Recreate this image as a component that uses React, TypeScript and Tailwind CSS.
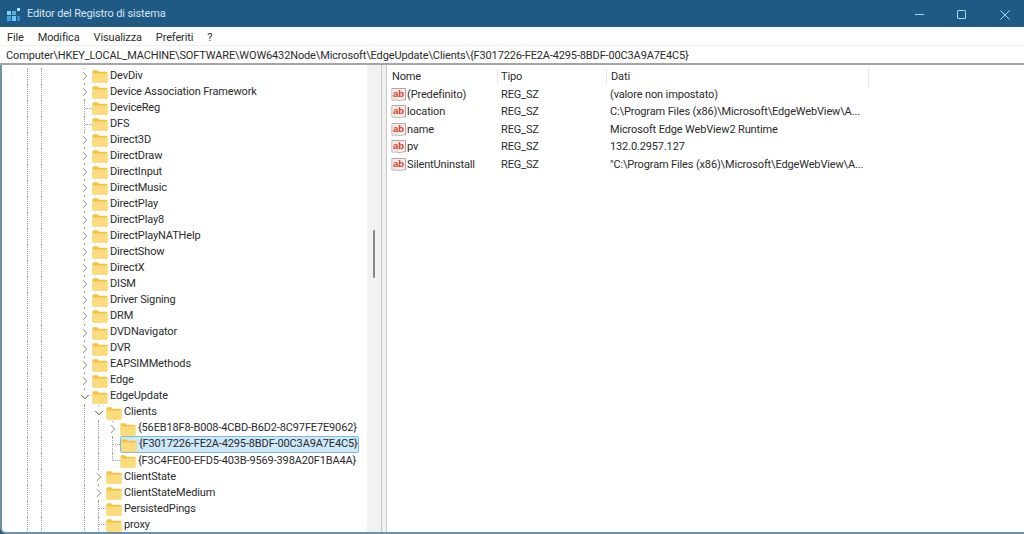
import React from 'react';
import { ChevronDown, ChevronRight } from 'lucide-react';

type Node = {
  label: string;
  level?: number;
  toggle?: 'closed' | 'open' | 'none';
  selected?: boolean;
  last?: boolean;
};

const tree: Node[] = [
  { label: 'DevDiv', toggle: 'closed' },
  { label: 'Device Association Framework', toggle: 'closed' },
  { label: 'DeviceReg', toggle: 'none' },
  { label: 'DFS', toggle: 'none' },
  { label: 'Direct3D', toggle: 'closed' },
  { label: 'DirectDraw', toggle: 'closed' },
  { label: 'DirectInput', toggle: 'closed' },
  { label: 'DirectMusic', toggle: 'closed' },
  { label: 'DirectPlay', toggle: 'closed' },
  { label: 'DirectPlay8', toggle: 'closed' },
  { label: 'DirectPlayNATHelp', toggle: 'closed' },
  { label: 'DirectShow', toggle: 'closed' },
  { label: 'DirectX', toggle: 'closed' },
  { label: 'DISM', toggle: 'closed' },
  { label: 'Driver Signing', toggle: 'closed' },
  { label: 'DRM', toggle: 'closed' },
  { label: 'DVDNavigator', toggle: 'closed' },
  { label: 'DVR', toggle: 'closed' },
  { label: 'EAPSIMMethods', toggle: 'closed' },
  { label: 'Edge', toggle: 'closed' },
  { label: 'EdgeUpdate', toggle: 'open' },
  { label: 'Clients', level: 1, toggle: 'open' },
  { label: '{56EB18F8-B008-4CBD-B6D2-8C97FE7E9062}', level: 2, toggle: 'closed' },
  { label: '{F3017226-FE2A-4295-8BDF-00C3A9A7E4C5}', level: 2, toggle: 'none', selected: true },
  { label: '{F3C4FE00-EFD5-403B-9569-398A20F1BA4A}', level: 2, toggle: 'none', last: true },
  { label: 'ClientState', level: 1, toggle: 'closed' },
  { label: 'ClientStateMedium', level: 1, toggle: 'closed' },
  { label: 'PersistedPings', level: 1, toggle: 'none' },
  { label: 'proxy', level: 1, toggle: 'none' },
];

const values = [
  { name: '(Predefinito)', data: '(valore non impostato)' },
  { name: 'location', data: 'C:\\Program Files (x86)\\Microsoft\\EdgeWebView\\A...' },
  { name: 'name', data: 'Microsoft Edge WebView2 Runtime' },
  { name: 'pv', data: '132.0.2957.127' },
  { name: 'SilentUninstall', data: '"C:\\Program Files (x86)\\Microsoft\\EdgeWebView\\A...' },
];

const RegeditIcon = () => (
  <svg width="16" height="16" viewBox="0 0 16 16">
    <rect x="1" y="4" width="4" height="4" fill="#7fd0f0" />
    <rect x="6" y="4" width="4" height="4" fill="#4fb3e0" />
    <rect x="1" y="9" width="4" height="5" fill="#3fa5d8" />
    <rect x="6" y="9" width="4" height="5" fill="#6fc6ec" />
    <rect x="11" y="9" width="3" height="5" fill="#2f8fc4" />
    <rect x="11" y="1" width="3" height="3" fill="#a8e2f8" />
  </svg>
);

const FolderIcon = () => (
  <svg width="16" height="14" viewBox="0 0 16 14" className="shrink-0">
    <path d="M0.5 2.5c0-.8.5-1.3 1.3-1.3h3.6l1.6 1.6h7.2c.8 0 1.3.5 1.3 1.3v8c0 .8-.5 1.3-1.3 1.3H1.8c-.8 0-1.3-.5-1.3-1.3z" fill="#f5c344" />
    <path d="M0.5 4.6h15v7.8c0 .8-.5 1.3-1.3 1.3H1.8c-.8 0-1.3-.5-1.3-1.3z" fill="#fbdc7c" />
  </svg>
);

const AbIcon = () => (
  <svg width="16" height="16" viewBox="0 0 16 16" className="shrink-0">
    <path d="M1 1.5h13.5v11.5c-2.2-1.4-4.4 1.4-6.8.4C5.3 12.4 3.2 13.4 1 13z" fill="#fff" stroke="#a9a9a9" strokeWidth="1" />
    <path d="M1.6 2.2h12.2v9.4c-2-.9-4 1.2-6.1.4-2.1-.8-4-.1-6.1.4z" fill="#fbe6e1" />
    <text x="2" y="9.6" fontSize="9.5" fontWeight="700" fill="#d2452f" fontFamily='"Liberation Sans", sans-serif'>ab</text>
  </svg>
);

// a passing tree line, 14px apart for each level
const Line = ({ wide }: { wide?: boolean }) => (
  <div className={`h-full shrink-0 border-l border-dotted border-[#a0a0a0] ${wide ? 'w-[43px]' : 'w-[14px]'}`} />
);

// the part of the tree line next to the folder: chevron or little tick
const Connector = ({ node }: { node: Node }) => {
  if (node.last) {
    return <div className="h-1/2 w-[8px] shrink-0 self-start border-b border-l border-dotted border-[#a0a0a0]" />;
  }
  return (
    <div className="flex h-full w-[8px] shrink-0 items-center border-l border-dotted border-[#a0a0a0]">
      {node.toggle === 'none' && <div className="w-[7px] border-t border-dotted border-[#a0a0a0]" />}
      {node.toggle === 'closed' && (
        <ChevronRight size={14} strokeWidth={1.5} color="#707070" className="-ml-[7px] shrink-0 bg-white" />
      )}
      {node.toggle === 'open' && (
        <ChevronDown size={14} strokeWidth={1.5} color="#404040" className="-ml-[7px] shrink-0 bg-white" />
      )}
    </div>
  );
};

const TreeRow = ({ node }: { node: Node }) => {
  const level = node.level ?? 0;
  return (
    <div className="flex h-[16.04px] shrink-0 items-center">
      <Line />
      <Line wide />
      {level > 0 && <Line />}
      {level > 1 && <Line />}
      <Connector node={node} />
      <div
        className={
          node.selected
            ? 'flex h-[17px] w-[239px] shrink-0 items-center rounded-[2px] border border-[#7fb8dc] bg-[#cde8f8]'
            : 'flex items-center'
        }
      >
        <FolderIcon />
        <span className="ml-[2px] whitespace-nowrap">{node.label}</span>
      </div>
    </div>
  );
};

export default function App() {
  return (
    <div
      className="flex h-[534px] w-[1024px] flex-col overflow-hidden bg-[#2b4a5e] text-[11px] tracking-[-0.14px] text-[#2b2b2b]"
      style={{ fontFamily: 'Roboto, "Liberation Sans", sans-serif' }}
    >
      <div className="flex h-[27px] shrink-0 items-center bg-[#1f5a85] pt-[2px] text-white">
        <div className="ml-[6px] mr-[5px]">
          <RegeditIcon />
        </div>
        <span className="text-[#d8e4ee]">Editor del Registro di sistema</span>
        <div className="ml-auto flex items-center text-[#a9d4ee]">
          <div className="mr-[33px] h-px w-[9px] bg-[#a9d4ee]" />
          <div className="mr-[34px] h-[9px] w-[9px] rounded-[1px] border border-[#a9d4ee]" />
          <svg width="10" height="10" viewBox="0 0 10 10" className="mr-[14px]">
            <path d="M0.5 0.5l9 9M9.5 0.5l-9 9" stroke="#a9d4ee" strokeWidth="1" />
          </svg>
        </div>
      </div>

      <div className="flex h-[18px] shrink-0 items-center gap-[14px] bg-white pt-[4px] pl-[7px]">
        <span>File</span>
        <span>Modifica</span>
        <span>Visualizza</span>
        <span>Preferiti</span>
        <span>?</span>
      </div>

      <div className="flex h-5 shrink-0 items-center border-t border-b-2 border-t-[#f0f0f0] border-b-[#a6a6a6] bg-white pt-[3px] pl-[6px]">
        Computer\HKEY_LOCAL_MACHINE\SOFTWARE\WOW6432Node\Microsoft\EdgeUpdate\Clients\{'{'}F3017226-FE2A-4295-8BDF-00C3A9A7E4C5{'}'}
      </div>

      <div className="flex min-h-0 flex-1 overflow-hidden rounded-bl-[6px] border-b-2 border-l-2 border-[#6a93a8] bg-white">
        <div className="flex w-[365px] shrink-0 flex-col overflow-hidden pt-[3px] pl-[25px]">
          {tree.map((node) => (
            <TreeRow key={node.label} node={node} />
          ))}
        </div>

        <div className="flex w-[14px] shrink-0 justify-center bg-[#f2f2f2] pt-[165px] pr-[1px]">
          <div className="h-[48px] w-[2px] rounded-full bg-[#8a8a8a]" />
        </div>
        <div className="w-[6px] shrink-0 border-l border-r border-[#c8c8c8] bg-[#f0f0f0]" />

        <div className="min-w-0 flex-1 pt-[1px]">
          <div className="flex h-[20px] items-center pt-[2px] pl-[5px]">
            <span className="w-[105px]">Nome</span>
            <span className="w-[109px] border-l border-[#e8e8e8] pl-[3px]">Tipo</span>
            <span className="w-[262px] border-l border-[#e8e8e8] pl-[4px]">Dati</span>
            <div className="h-[19px] border-l border-[#e8e8e8]" />
          </div>
          {values.map((row) => (
            <div key={row.name} className="flex h-[17.5px] items-center pl-[4px]">
              <div className="flex w-[110px] items-center">
                <AbIcon />
                <span>{row.name}</span>
              </div>
              <span className="w-[109px]">REG_SZ</span>
              <span className="whitespace-nowrap">{row.data}</span>
            </div>
          ))}
        </div>
      </div>
    </div>
  );
}
